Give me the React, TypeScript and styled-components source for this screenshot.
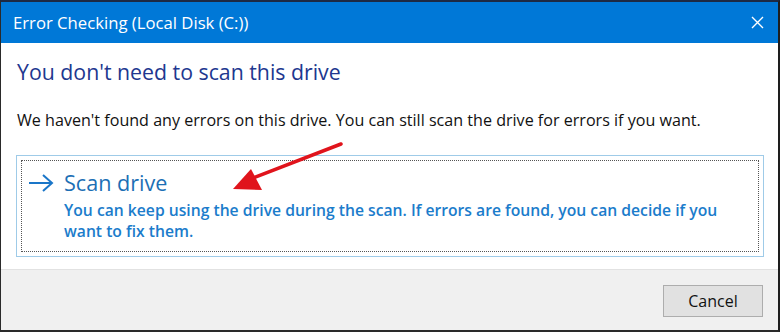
import styled, { createGlobalStyle } from "styled-components";

const Global = createGlobalStyle`
  html, body { margin: 0; padding: 0; background: #fff; }
  body { font-family: "Open Sans", "Noto Sans", sans-serif; }
`;

const Window = styled.div`
  position: relative;
  width: 780px;
  height: 332px;
  box-sizing: border-box;
  display: flex;
  flex-direction: column;
  border-top: 2px solid #1d2a44;
  border-left: 1px solid #2a2a2a;
  border-right: 2px solid #1e1e1e;
  border-bottom: 2px solid #2a2a2a;
  background: #fff;
  overflow: hidden;
`;

const TitleBar = styled.div`
  height: 41px;
  flex: none;
  background: #0078d7;
  color: #fff;
  display: flex;
  align-items: center;
  justify-content: space-between;
  padding: 0 14px 0 12px;
  font-size: 16.7px;
`;

const Close = styled.svg`
  width: 13px;
  height: 13px;
`;

const Body = styled.div`
  flex: 1;
  padding: 15px 15px 0 15px;
  display: flex;
  flex-direction: column;
`;

const Heading = styled.div`
  font-size: 21.3px;
  color: #21378f;
  padding-left: 1px;
  line-height: 28px;
`;

const Text = styled.div`
  margin-top: 24px;
  font-size: 16.1px;
  color: #111;
  padding-left: 1px;
  line-height: 20px;
`;

const LinkBox = styled.div`
  margin-top: 25px;
  width: 748px;
  height: 102px;
  box-sizing: border-box;
  border: 1px solid #9fcbe8;
  padding: 4px;
`;

const LinkInner = styled.div`
  height: 100%;
  box-sizing: border-box;
  border: 1px dotted #555;
  display: flex;
  padding: 8px 0 0 6px;
  gap: 10px;
`;

const Arrow = styled.svg`
  width: 26px;
  height: 20px;
  margin-top: 4px;
  flex: none;
`;

const LinkText = styled.div`
  display: flex;
  flex-direction: column;
`;

const LinkTitle = styled.div`
  font-size: 21.6px;
  color: #1c6fb5;
  line-height: 28px;
`;

const LinkDesc = styled.div`
  margin-top: 3px;
  font-size: 15.7px;
  font-weight: 600;
  color: #1b7ccb;
  line-height: 21px;
`;

const Footer = styled.div`
  height: 60px;
  flex: none;
  background: #f0f0f0;
  border-top: 1px solid #e2e2e2;
  display: flex;
  align-items: center;
  justify-content: flex-end;
  padding-right: 15px;
`;

const Button = styled.button`
  width: 100px;
  height: 32px;
  background: #e1e1e1;
  border: 1px solid #adadad;
  font-family: "Open Sans", "Noto Sans", sans-serif;
  font-size: 16px;
  color: #111;
  margin-top: 2px;
`;

const Annotation = styled.svg`
  position: absolute;
  left: 0;
  top: 0;
  pointer-events: none;
`;

const App = () => {
  return (
    <>
      <Global />
      <Window>
        <TitleBar>
          <span>Error Checking (Local Disk (C:))</span>
          <Close viewBox="0 0 13 13">
            <path d="M1 1 L12 12 M12 1 L1 12" stroke="#fff" strokeWidth="1.4" />
          </Close>
        </TitleBar>
        <Body>
          <Heading>You don't need to scan this drive</Heading>
          <Text>
            We haven't found any errors on this drive. You can still scan the drive for errors if you want.
          </Text>
          <LinkBox>
            <LinkInner>
              <Arrow viewBox="0 0 26 20">
                <path d="M1 10 H24 M15 2 L24 10 L15 18" stroke="#1a76c8" strokeWidth="2" fill="none" />
              </Arrow>
              <LinkText>
                <LinkTitle>Scan drive</LinkTitle>
                <LinkDesc>
                  You can keep using the drive during the scan. If errors are found, you can decide if you
                  <br />
                  want to fix them.
                </LinkDesc>
              </LinkText>
            </LinkInner>
          </LinkBox>
        </Body>
        <Footer>
          <Button>Cancel</Button>
        </Footer>
        <Annotation width="780" height="332" viewBox="0 0 780 332">
          <path d="M340 142 L252 176" stroke="#e0141c" strokeWidth="3.5" strokeLinecap="round" />
          <polygon points="232,187 250,167 261,188" fill="#e0141c" />
        </Annotation>
      </Window>
    </>
  );
};

export default App;
